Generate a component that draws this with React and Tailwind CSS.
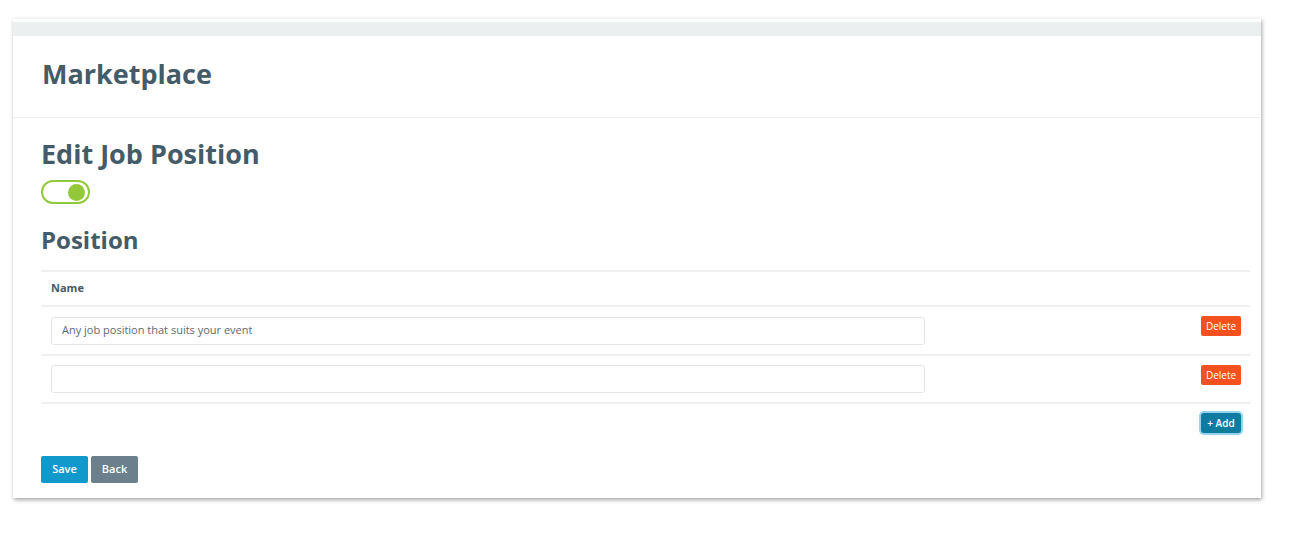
export default function App() {
  const font = { fontFamily: "'Open Sans', Lato, sans-serif" };
  return (
    <div className="w-[1293px] h-[553px] bg-white pt-[18px] pl-[13px]" style={font}>
      <div className="w-[1248px] bg-white shadow-[1px_2px_4px_rgba(0,0,0,0.35)] border-t border-[#f2f3f4]">
        <div className="h-[3px] bg-white" />
        <div className="h-[14px] bg-[#eceff0]" />
        <div className="h-[82px] border-b border-[#eef0f1] flex items-center pl-[29px]">
          <h1 className="text-[27px] font-bold text-[#445b68] leading-none mt-[-6px]">Marketplace</h1>
        </div>
        <div className="pl-[28px] pr-[11px] pt-[22px] pb-[15px]">
          <h2 className="text-[27px] font-bold text-[#445b68] leading-none">Edit Job Position</h2>
          <div className="mt-[13px] w-[49px] h-[24px] rounded-full border-2 border-[#93c83a] flex items-center justify-end pr-[3px]">
            <div className="w-[17px] h-[17px] rounded-full bg-[#93c83a]" />
          </div>
          <h3 className="mt-[24px] text-[24px] font-bold text-[#445b68] leading-none">Position</h3>
          <div className="mt-[18px] border-t-2 border-[#eef0f2]">
            <div className="h-[35px] flex items-center pl-[10px] text-[11px] font-bold text-[#445b68] border-b-2 border-[#eef0f2]">Name</div>
            <div className="h-[49px] flex items-center justify-between pl-[10px] pr-[9px] border-b-2 border-[#eef0f2]">
              <div className="w-[874px] h-[28px] border border-[#e3e5e8] rounded-[3px] flex items-center pl-[10px] text-[11px] text-[#5e6a73]">
                Any job position that suits your event
              </div>
              <button className="self-start mt-[9px] w-[40px] h-[20px] bg-[#f4511e] text-white text-[10px] rounded-[2px] leading-none">Delete</button>
            </div>
            <div className="h-[48px] flex items-center justify-between pl-[10px] pr-[9px] border-b-2 border-[#eef0f2]">
              <div className="w-[874px] h-[28px] border border-[#e3e5e8] rounded-[3px]" />
              <button className="self-start mt-[9px] w-[40px] h-[20px] bg-[#f4511e] text-white text-[10px] rounded-[2px] leading-none">Delete</button>
            </div>
            <div className="flex justify-end pr-[9px] pt-[9px]">
              <button className="w-[40px] h-[20px] bg-[#0e7ba0] text-white text-[10px] font-semibold rounded-[3px] leading-none shadow-[0_0_0_2px_rgba(80,180,225,0.6)]">+ Add</button>
            </div>
          </div>
          <div className="mt-[23px] flex gap-[3px]">
            <button className="w-[47px] h-[27px] bg-[#1199cc] text-white text-[11px] font-semibold rounded-[2px]">Save</button>
            <button className="w-[47px] h-[27px] bg-[#6b7f8c] text-white text-[11px] font-semibold rounded-[2px]">Back</button>
          </div>
        </div>
      </div>
    </div>
  );
}
